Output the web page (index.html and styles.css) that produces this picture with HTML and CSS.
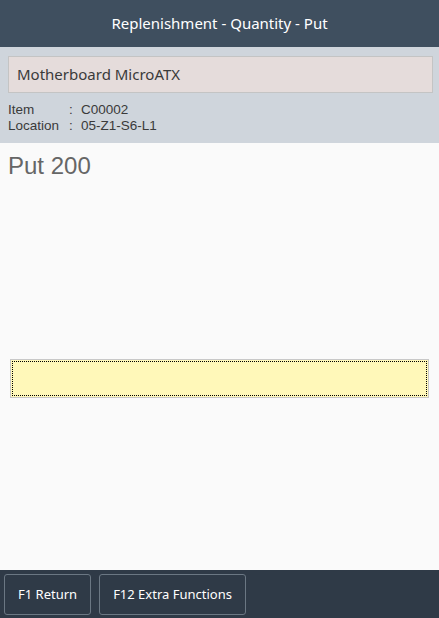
FILE: index.html
```html
<!DOCTYPE html>
<html lang="en">
<head>
  <meta charset="UTF-8">
  <meta name="viewport" content="width=device-width, initial-scale=1.0">
  <title>Replenishment - Quantity - Put</title>
  <link rel="stylesheet" href="styles.css">
</head>
<body>
  <div class="page">
    <div class="title-bar">Replenishment - Quantity - Put</div>

    <div class="info">
      <div class="product">Motherboard MicroATX</div>
      <div class="details">
        <div class="row"><span class="lbl">Item</span><span class="sep">:</span><span>C00002</span></div>
        <div class="row"><span class="lbl">Location</span><span class="sep">:</span><span>05-Z1-S6-L1</span></div>
      </div>
    </div>

    <div class="content">
      <h1 class="prompt">Put 200</h1>
      <div class="field">
        <input type="text" id="qty" class="qty-input">
      </div>
    </div>

    <div class="footer">
      <button type="button" class="fkey">F1 Return</button>
      <button type="button" class="fkey">F12 Extra Functions</button>
    </div>
  </div>
</body>
</html>
```
FILE: styles.css
```css
html, body {
  margin: 0;
  height: 100%;
}

body {
  font-family: "Noto Sans", "Liberation Sans", Arial, sans-serif;
  background-color: #fafafa;
  color: #32363a;
}

.page {
  display: flex;
  flex-direction: column;
  height: 618px;
}

.title-bar {
  height: 47px;
  line-height: 46px;
  background-color: #3f4f5f;
  color: #fff;
  text-align: center;
  font-size: 15px;
}

.info {
  background-color: #cfd5dc;
  padding: 9px 6px 9px 8px;
  height: 78px;
}

.product {
  height: 35px;
  line-height: 35px;
  background-color: #e5dcdb;
  border: 1px solid #c4c4c4;
  padding-left: 8px;
  font-size: 15px;
  color: #3a3a3a;
}

.details {
  margin-top: 9px;
  font-family: "Liberation Sans", Arial, sans-serif;
  font-size: 13.5px;
  line-height: 16px;
  color: #3a3a3a;
}

.row { display: flex; }
.lbl { width: 61px; }
.sep { width: 12px; }

.content {
  flex: 1;
  padding: 9px 8px 0 10px;
}

.prompt {
  margin: 0 0 0 -2px;
  font-family: "Liberation Sans", Arial, sans-serif;
  font-weight: normal;
  font-size: 24px;
  line-height: 28px;
  color: #666;
}

.field {
  margin-top: 179px;
  margin-right: 2px;
}

.qty-input {
  display: block;
  width: 100%;
  height: 39px;
  box-sizing: border-box;
  background-color: #fff8b9;
  border: 1px solid #c8c8c8;
  outline: 1px dotted #000;
  outline-offset: -3px;
  padding: 0 6px;
  font-size: 14px;
}

.footer {
  height: 48px;
  background-color: #2f3a47;
  display: flex;
  align-items: center;
  gap: 8px;
  padding: 0 4px;
}

.fkey {
  height: 41px;
  padding: 0 13px;
  background-color: #2f3a47;
  color: #fff;
  border: 1px solid #6b7783;
  border-radius: 3px;
  font-family: "Noto Sans", "Liberation Sans", Arial, sans-serif;
  font-size: 13px;
  cursor: pointer;
}
```
